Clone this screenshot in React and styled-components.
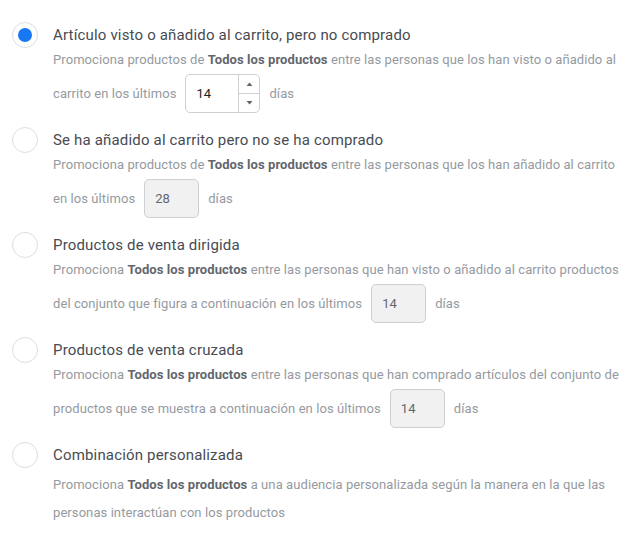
import React from "react";
import styled, { createGlobalStyle } from "styled-components";

const Global = createGlobalStyle`
  html, body { margin: 0; padding: 0; background: #ffffff; }
  body { font-family: Roboto, "Liberation Sans", Arial, sans-serif; -webkit-font-smoothing: antialiased; }
  * { box-sizing: border-box; }
`;

const Page = styled.div`
  width: 644px;
  padding: 25px 0 0 12px;
`;

const Option = styled.div`
  display: flex;
  align-items: flex-start;
  margin-bottom: 17px;
`;

const Radio = styled.span`
  flex: none;
  width: 26px;
  height: 26px;
  margin-top: -3px;
  border-radius: 50%;
  border: 1px solid #dcdee1;
  background: #fff;
  display: flex;
  align-items: center;
  justify-content: center;
  &::after {
    content: "";
    width: 14px;
    height: 14px;
    border-radius: 50%;
    background: ${(p) => (p.$checked ? "#1877f2" : "transparent")};
  }
`;

const Content = styled.div`
  margin-left: 15px;
  display: flex;
  flex-direction: column;
`;

const Title = styled.div`
  font-size: 15px;
  line-height: 20px;
  letter-spacing: 0.17px;
  color: #474b52;
  white-space: nowrap;
`;

const Desc = styled.div`
  margin-top: ${(p) => p.$gap}px;
  font-size: 13px;
  letter-spacing: 0.08px;
  color: #959aa1;
  display: flex;
  flex-direction: column;
`;

const Line = styled.div`
  height: 28px;
  line-height: 28px;
  white-space: nowrap;
`;

const InputLine = styled.div`
  display: flex;
  align-items: center;
  height: 39px;
  white-space: nowrap;
`;

const B = styled.b`
  font-weight: 700;
  color: #62666d;
`;

const Box = styled.div`
  display: flex;
  width: ${(p) => p.$w}px;
  height: 39px;
  margin: 0 9px;
  border: 1px solid #ccd0d5;
  border-radius: 5px;
  background: ${(p) => (p.$disabled ? "#f1f1f1" : "#ffffff")};
  overflow: hidden;
`;

const Value = styled.input`
  flex: 1;
  min-width: 0;
  border: none;
  outline: none;
  background: transparent;
  padding: 0 0 0 10px;
  font-family: inherit;
  font-size: 13px;
  color: ${(p) => (p.disabled ? "#606770" : "#1c1e21")};
  -webkit-text-fill-color: ${(p) => (p.disabled ? "#606770" : "#1c1e21")};
  opacity: 1;
`;

const Spinner = styled.div`
  flex: none;
  width: 21px;
  border-left: 1px solid #ccd0d5;
  display: flex;
  flex-direction: column;
`;

const SpinBtn = styled.div`
  flex: 1;
  display: flex;
  align-items: center;
  justify-content: center;
  & + & { border-top: 1px solid #ccd0d5; }
`;

const Tri = ({ up }) => (
  <svg width="7" height="4" viewBox="0 0 7 4">
    <path d={up ? "M0.5 4 L3.5 0.5 L6.5 4 Z" : "M0.5 0 L3.5 3.5 L6.5 0 Z"} fill="#606770" />
  </svg>
);

const NumberField = ({ value, spinner }) => (
  <Box $w={spinner ? 75 : 55} $disabled={!spinner}>
    <Value value={value} readOnly disabled={!spinner} />
    {spinner && (
      <Spinner>
        <SpinBtn><Tri up /></SpinBtn>
        <SpinBtn><Tri /></SpinBtn>
      </Spinner>
    )}
  </Box>
);

export default function App() {
  return (
    <Page>
      <Global />
      <Option>
        <Radio $checked />
        <Content>
          <Title>Artículo visto o añadido al carrito, pero no comprado</Title>
          <Desc $gap={1}>
            <Line>
              Promociona productos de <B>Todos los productos</B> entre las personas que los han visto o añadido al
            </Line>
            <InputLine>
              carrito en los últimos
              <NumberField value="14" spinner />
              días
            </InputLine>
          </Desc>
        </Content>
      </Option>

      <Option>
        <Radio />
        <Content>
          <Title>Se ha añadido al carrito pero no se ha comprado</Title>
          <Desc $gap={1}>
            <Line>
              Promociona productos de <B>Todos los productos</B> entre las personas que los han añadido al carrito
            </Line>
            <InputLine>
              en los últimos
              <NumberField value="28" />
              días
            </InputLine>
          </Desc>
        </Content>
      </Option>

      <Option>
        <Radio />
        <Content>
          <Title>Productos de venta dirigida</Title>
          <Desc $gap={1}>
            <Line>
              Promociona <B>Todos los productos</B> entre las personas que han visto o añadido al carrito productos
            </Line>
            <InputLine>
              del conjunto que figura a continuación en los últimos
              <NumberField value="14" />
              días
            </InputLine>
          </Desc>
        </Content>
      </Option>

      <Option>
        <Radio />
        <Content>
          <Title>Productos de venta cruzada</Title>
          <Desc $gap={1}>
            <Line>
              Promociona <B>Todos los productos</B> entre las personas que han comprado artículos del conjunto de
            </Line>
            <InputLine>
              productos que se muestra a continuación en los últimos
              <NumberField value="14" />
              días
            </InputLine>
          </Desc>
        </Content>
      </Option>

      <Option>
        <Radio />
        <Content>
          <Title>Combinación personalizada</Title>
          <Desc $gap={6}>
            <Line>
              Promociona <B>Todos los productos</B> a una audiencia personalizada según la manera en la que las
            </Line>
            <Line>personas interactúan con los productos</Line>
          </Desc>
        </Content>
      </Option>
    </Page>
  );
}
